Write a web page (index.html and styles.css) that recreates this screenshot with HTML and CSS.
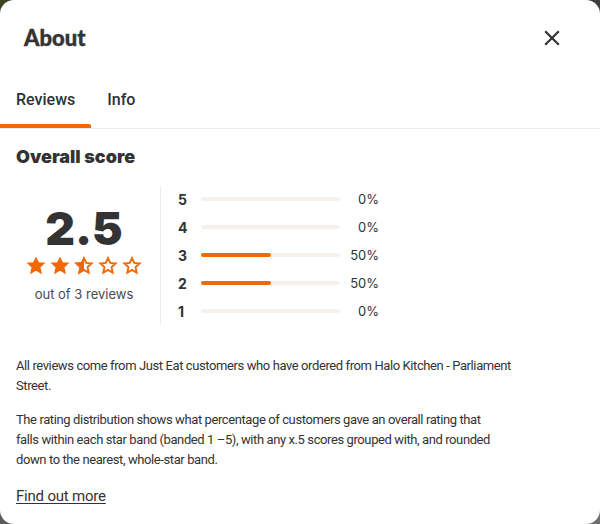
FILE: index.html
```html
<!DOCTYPE html>
<html lang="en">
<head>
<meta charset="utf-8">
<title>About</title>
<link rel="stylesheet" href="styles.css">
</head>
<body>
<div class="modal">
  <header class="header">
    <h1 class="title">About</h1>
    <button class="close" aria-label="Close">
      <svg width="16" height="16" viewBox="0 0 16 16"><path d="M1.2 1.2 L14.8 14.8 M14.8 1.2 L1.2 14.8" stroke="#333" stroke-width="2.2" fill="none"/></svg>
    </button>
  </header>
  <nav class="tabs">
    <div class="tab active">Reviews</div>
    <div class="tab">Info</div>
  </nav>
  <section class="content">
    <h2 class="section-title">Overall score</h2>
    <div class="score">
      <div class="summary">
        <div class="big">2.5</div>
        <div class="stars">
          <svg class="star" viewBox="0 0 24 24"><polygon class="fill" points="12,0.6 15.4,7.4 23.4,8.2 17.4,13.6 19.1,21.9 12,17.8 4.9,21.9 6.6,13.6 0.6,8.2 8.6,7.4"/></svg>
          <svg class="star" viewBox="0 0 24 24"><polygon class="fill" points="12,0.6 15.4,7.4 23.4,8.2 17.4,13.6 19.1,21.9 12,17.8 4.9,21.9 6.6,13.6 0.6,8.2 8.6,7.4"/></svg>
          <svg class="star" viewBox="0 0 24 24"><defs><clipPath id="half"><rect x="0" y="0" width="12" height="24"/></clipPath></defs><polygon class="fill" clip-path="url(#half)" points="12,0.6 15.4,7.4 23.4,8.2 17.4,13.6 19.1,21.9 12,17.8 4.9,21.9 6.6,13.6 0.6,8.2 8.6,7.4"/><polygon class="line" points="12,2.6 14.7,8.3 21.1,9 16.3,13.3 17.6,19.9 12,16.6 6.4,19.9 7.7,13.3 2.9,9 9.3,8.3"/></svg>
          <svg class="star" viewBox="0 0 24 24"><polygon class="line" points="12,2.6 14.7,8.3 21.1,9 16.3,13.3 17.6,19.9 12,16.6 6.4,19.9 7.7,13.3 2.9,9 9.3,8.3"/></svg>
          <svg class="star" viewBox="0 0 24 24"><polygon class="line" points="12,2.6 14.7,8.3 21.1,9 16.3,13.3 17.6,19.9 12,16.6 6.4,19.9 7.7,13.3 2.9,9 9.3,8.3"/></svg>
        </div>
        <div class="count">out of 3 reviews</div>
      </div>
      <div class="bars">
        <div class="row"><span class="num">5</span><span class="track"><span class="bar" style="width:0%"></span></span><span class="pct">0%</span></div>
        <div class="row"><span class="num">4</span><span class="track"><span class="bar" style="width:0%"></span></span><span class="pct">0%</span></div>
        <div class="row"><span class="num">3</span><span class="track"><span class="bar" style="width:50%"></span></span><span class="pct">50%</span></div>
        <div class="row"><span class="num">2</span><span class="track"><span class="bar" style="width:50%"></span></span><span class="pct">50%</span></div>
        <div class="row"><span class="num">1</span><span class="track"><span class="bar" style="width:0%"></span></span><span class="pct">0%</span></div>
      </div>
    </div>
    <p class="text">All reviews come from Just Eat customers who have ordered from Halo Kitchen - Parliament<br>Street.</p>
    <p class="text">The rating distribution shows what percentage of customers gave an overall rating that<br>falls within each star band (banded 1 –5), with any x.5 scores grouped with, and rounded<br>down to the nearest, whole-star band.</p>
    <a class="more" href="#">Find out more</a>
  </section>
</div>
</body>
</html>
```
FILE: styles.css
```css
html, body {
  margin: 0;
  padding: 0;
}
body {
  width: 600px;
  height: 524px;
  overflow: hidden;
  background: linear-gradient(160deg, #38431f 0%, #3a3a3a 25%, #555 60%, #6f6f6f 100%);
  font-family: Roboto, "Liberation Sans", sans-serif;
  color: #333;
}
.modal {
  width: 600px;
  height: 524px;
  background: #fff;
  border-radius: 14px;
  overflow: hidden;
  box-sizing: border-box;
}
.header {
  height: 76px;
  display: flex;
  align-items: center;
  justify-content: space-between;
  padding: 0 40px 0 24px;
}
.title {
  margin: 0;
  font-family: Lato, sans-serif;
  font-weight: 900;
  font-size: 22px;
  line-height: 28px;
  color: #333;
  -webkit-text-stroke: 0.4px #333;
}
.close {
  border: 0;
  background: none;
  padding: 0;
  width: 16px;
  height: 16px;
  display: flex;
}
.tabs {
  display: flex;
  border-bottom: 1px solid #ebebeb;
}
.tab {
  position: relative;
  padding: 14px 16px 18px;
  line-height: 20px;
  font-size: 16px;
  font-weight: 500;
  color: #2a3437;
}
.tab.active::after {
  content: "";
  position: absolute;
  left: 0;
  right: 0;
  bottom: 0;
  height: 4px;
  background: #f36805;
  border-radius: 0 2px 0 0;
}
.content {
  padding: 16px 16px 0;
}
.section-title {
  margin: 0;
  font-family: Inter, sans-serif;
  font-weight: 900;
  font-size: 18px;
  line-height: 24px;
  color: #333;
}
.score {
  display: flex;
  margin-top: 16px;
  margin-bottom: 31px;
}
.summary {
  width: 136px;
  margin-right: 8px;
  display: flex;
  flex-direction: column;
  align-items: center;
  justify-content: center;
  padding-bottom: 2px;
}
.big {
  font-family: Inter, sans-serif;
  font-weight: 900;
  font-size: 46px;
  line-height: 44px;
  color: #333;
}
.stars {
  display: flex;
  gap: 4px;
  margin-top: 6px;
}
.star {
  width: 20px;
  height: 20px;
  display: block;
}
.fill {
  fill: #f36805;
}
.line {
  fill: none;
  stroke: #f36805;
  stroke-width: 2.3;
  stroke-linejoin: miter;
}
.count {
  margin-top: 9px;
  font-family: Inter, sans-serif;
  font-size: 13px;
  line-height: 18px;
  color: #4a4a4a;
}
.bars {
  border-left: 1px solid #ececec;
  padding-left: 17px;
  margin-top: 1px;
}
.row {
  display: flex;
  align-items: center;
  height: 28px;
}
.row:first-child {
  margin-top: -1px;
}
.num {
  width: 23px;
  font-family: Inter, sans-serif;
  font-weight: 700;
  font-size: 14px;
  color: #333;
}
.track {
  width: 139px;
  height: 4px;
  border-radius: 2px;
  background: #f5f2ee;
  display: flex;
}
.bar {
  height: 4px;
  border-radius: 2px;
  background: #f36805;
}
.pct {
  width: 39px;
  text-align: right;
  font-family: Inter, sans-serif;
  font-size: 13px;
  color: #333;
}
.text {
  margin: 0 0 14px;
  font-size: 13px;
  letter-spacing: -0.4px;
  line-height: 20px;
  color: #333;
}
.text + .text {
  margin-bottom: 16px;
}
.more {
  display: inline-block;
  font-size: 15px;
  line-height: 20px;
  letter-spacing: -0.2px;
  color: #333;
  text-decoration: underline;
  text-underline-offset: 2px;
}
```
